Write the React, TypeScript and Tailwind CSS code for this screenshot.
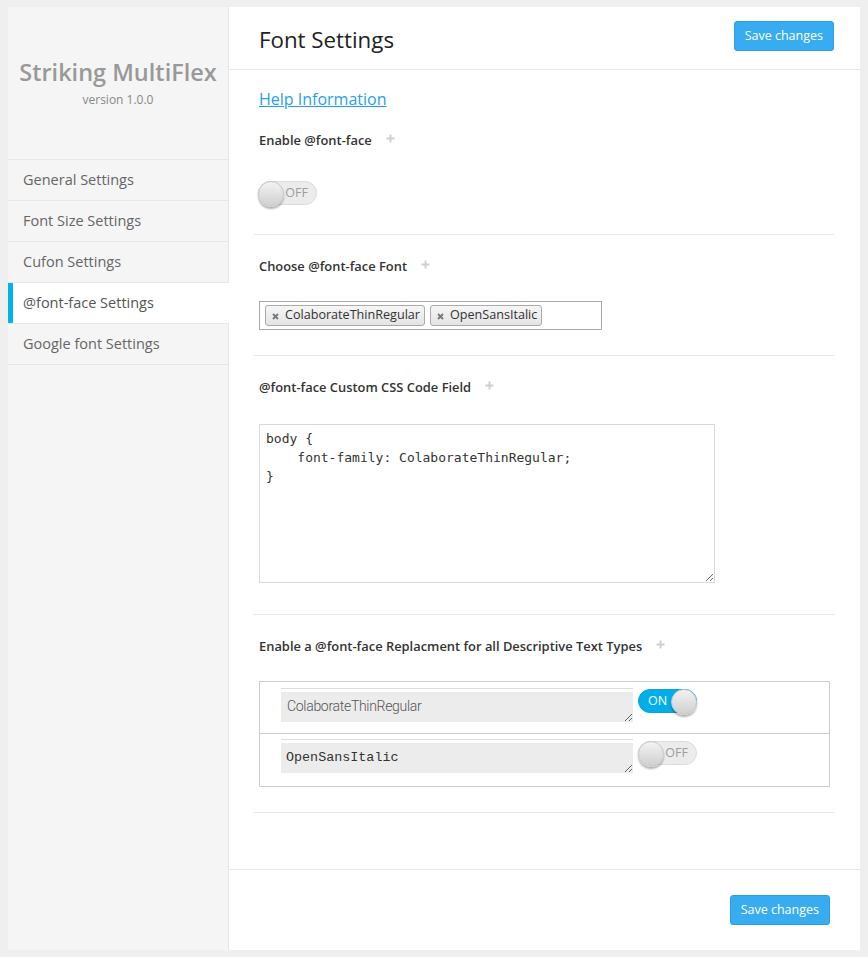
import React from "react";

const OS = { fontFamily: '"Open Sans", "Noto Sans", sans-serif' };

function Plus() {
  return (
    <svg width="9" height="9" viewBox="0 0 9 9" className="ml-[14px] mt-[-4px]">
      <path d="M4.5 0.5v8M0.5 4.5h8" stroke="#cfcfcf" strokeWidth="2" />
    </svg>
  );
}

function Label({ children }: { children: React.ReactNode }) {
  return (
    <div className="flex items-center pl-[5px] text-[12.9px] leading-[18px] font-semibold text-[#333]">
      <span>{children}</span>
      <Plus />
    </div>
  );
}

function Toggle({ on }: { on: boolean }) {
  return (
    <div
      className={
        on
          ? "relative w-[59px] h-[24px] rounded-full bg-[#00aeea] border border-[#0aa3da]"
          : "relative w-[59px] h-[24px] rounded-full bg-[#ececec] border border-[#dcdcdc]"
      }
    >
      {on ? (
        <span className="absolute left-[9px] top-[2px] text-[12.5px] leading-[18px] text-white">ON</span>
      ) : (
        <span className="absolute right-[8px] top-[2px] text-[12.5px] leading-[18px] text-[#9d9d9d]">OFF</span>
      )}
      <div
        className={
          on
            ? "absolute right-[-1px] top-[-1px] w-[26px] h-[26px] rounded-full bg-gradient-to-b from-[#f3f3f3] to-[#cfcfcf] border border-[#c8c8c8] shadow-[0_2px_2px_rgba(0,0,0,0.3)]"
            : "absolute left-[-1px] top-[-1px] w-[26px] h-[26px] rounded-full bg-gradient-to-b from-[#f3f3f3] to-[#cfcfcf] border border-[#c8c8c8] shadow-[0_2px_2px_rgba(0,0,0,0.3)]"
        }
      />
    </div>
  );
}

function Tag({ text }: { text: string }) {
  return (
    <div className="flex items-center h-[21px] border border-[#aaa] rounded-[3px] bg-gradient-to-b from-[#f6f6f6] to-[#e4e4e4] pl-[6px] pr-[4px] text-[12.6px] text-[#333]">
      <svg width="7" height="7" viewBox="0 0 7 7" className="mr-[6px] mt-[1px]">
        <path d="M1 1l5 5M6 1l-5 5" stroke="#777" strokeWidth="1.8" />
      </svg>
      <span>{text}</span>
    </div>
  );
}

function SaveButton() {
  return (
    <button className="h-[30px] px-[10px] rounded-[3px] bg-[#38acf0] border border-[#2a9fe3] text-white text-[12.5px] leading-none">
      Save changes
    </button>
  );
}

export default function App() {
  const nav = ["General Settings", "Font Size Settings", "Cufon Settings", "@font-face Settings", "Google font Settings"];
  return (
    <div className="min-h-screen bg-[#efefef] px-[8px] pt-[7px] pb-[7px]" style={OS}>
      <div className="flex w-[852px] h-[943px]">
        {/* Sidebar */}
        <div className="w-[221px] bg-[#f5f5f5] border-r border-[#e6e6e6] flex flex-col">
          <div className="h-[153px] border-b border-[#e6e6e6] flex flex-col items-center pt-[50px]">
            <div className="text-[23.5px] leading-[30px] font-semibold text-[#999]">Striking MultiFlex</div>
            <div className="text-[12px] leading-[16px] text-[#888] mt-[5px]">version 1.0.0</div>
          </div>
          {nav.map((n) => {
            const active = n === "@font-face Settings";
            return (
              <div
                key={n}
                className={
                  active
                    ? "relative h-[41px] border-b border-[#e6e6e6] bg-white mr-[-1px] flex items-center pl-[15px] text-[14.5px] text-[#555]"
                    : "relative h-[41px] border-b border-[#e6e6e6] flex items-center pl-[15px] text-[14.5px] text-[#666]"
                }
              >
                {active && <div className="absolute left-0 top-0 w-[5px] h-[40px] bg-[#00b3ea]" />}
                {n}
              </div>
            );
          })}
        </div>

        {/* Main */}
        <div className="flex-1 bg-white flex flex-col">
          <div className="h-[63px] border-b border-[#e6e6e6] flex items-center justify-between pl-[30px] pr-[26px]">
            <div className="text-[22.3px] text-[#222] mt-[3px]">Font Settings</div>
            <div className="mt-[-4px]">
              <SaveButton />
            </div>
          </div>

          <div className="flex-1 pl-[25px] pr-[26px]">
            <div className="pl-[5px] pt-[18px] text-[16px] leading-[22px]">
              <span className="text-[#1fa0f0] underline">Help Information</span>
            </div>

            <div className="pt-[21px] pb-[29px] border-b border-[#e6e6e6]">
              <Label>Enable @font-face</Label>
              <div className="mt-[32px] pl-[4px]">
                <Toggle on={false} />
              </div>
            </div>

            <div className="pt-[22px] pb-[25px] border-b border-[#e6e6e6]">
              <Label>Choose @font-face Font</Label>
              <div className="mt-[26px] ml-[5px] w-[343px] h-[29px] border border-[#aaa] flex items-center gap-[5px] pl-[5px]">
                <Tag text="ColaborateThinRegular" />
                <Tag text="OpenSansItalic" />
              </div>
            </div>

            <div className="pt-[22px] pb-[31px] border-b border-[#e6e6e6]">
              <Label>@font-face Custom CSS Code Field</Label>
              <textarea
                readOnly
                className="block mt-[28px] ml-[5px] w-[456px] h-[159px] border border-[#d9d9d9] px-[6px] py-[4px] text-[13px] leading-[19px] text-[#333] outline-none"
                style={{ fontFamily: '"DejaVu Sans Mono", "Liberation Mono", monospace' }}
                defaultValue={"body {\n    font-family: ColaborateThinRegular;\n}"}
              />
            </div>

            <div className="pt-[22px] pb-[25px] border-b border-[#e6e6e6]">
              <Label>Enable a @font-face Replacment for all Descriptive Text Types</Label>
              <div className="mt-[26px] ml-[5px] w-[571px] border border-[#ccc]">
                <div className="h-[52px] border-b border-[#ccc] flex items-start pl-[21px] pt-[6px]">
                  <div className="w-[352px] border-t border-[#ddd] pt-[3px]">
                    <textarea
                      readOnly
                      className="block w-[352px] h-[30px] bg-[#ececec] px-[6px] py-[3px] text-[14px] leading-[22px] tracking-[-0.3px] text-[#555] outline-none resize-y overflow-hidden"
                      style={{ fontFamily: 'Roboto, "Open Sans", sans-serif', fontWeight: 300 }}
                      defaultValue="ColaborateThinRegular"
                    />
                  </div>
                  <div className="ml-[5px] mt-[1px]">
                    <Toggle on={true} />
                  </div>
                </div>
                <div className="h-[52px] flex items-start pl-[21px] pt-[5px]">
                  <div className="w-[352px] border-t border-[#ddd] pt-[3px]">
                    <textarea
                      readOnly
                      className="block w-[352px] h-[30px] bg-[#ececec] px-[5px] py-[4px] text-[13.4px] leading-[22px] text-[#333] outline-none resize-y overflow-hidden"
                      style={{ fontFamily: '"Liberation Mono", "DejaVu Sans Mono", monospace' }}
                      defaultValue="OpenSansItalic"
                    />
                  </div>
                  <div className="ml-[5px] mt-[2px]">
                    <Toggle on={false} />
                  </div>
                </div>
              </div>
            </div>
          </div>

          <div className="h-[81px] border-t border-[#e6e6e6] flex justify-end items-start pt-[25px] pr-[30px]">
            <SaveButton />
          </div>
        </div>
      </div>
    </div>
  );
}
